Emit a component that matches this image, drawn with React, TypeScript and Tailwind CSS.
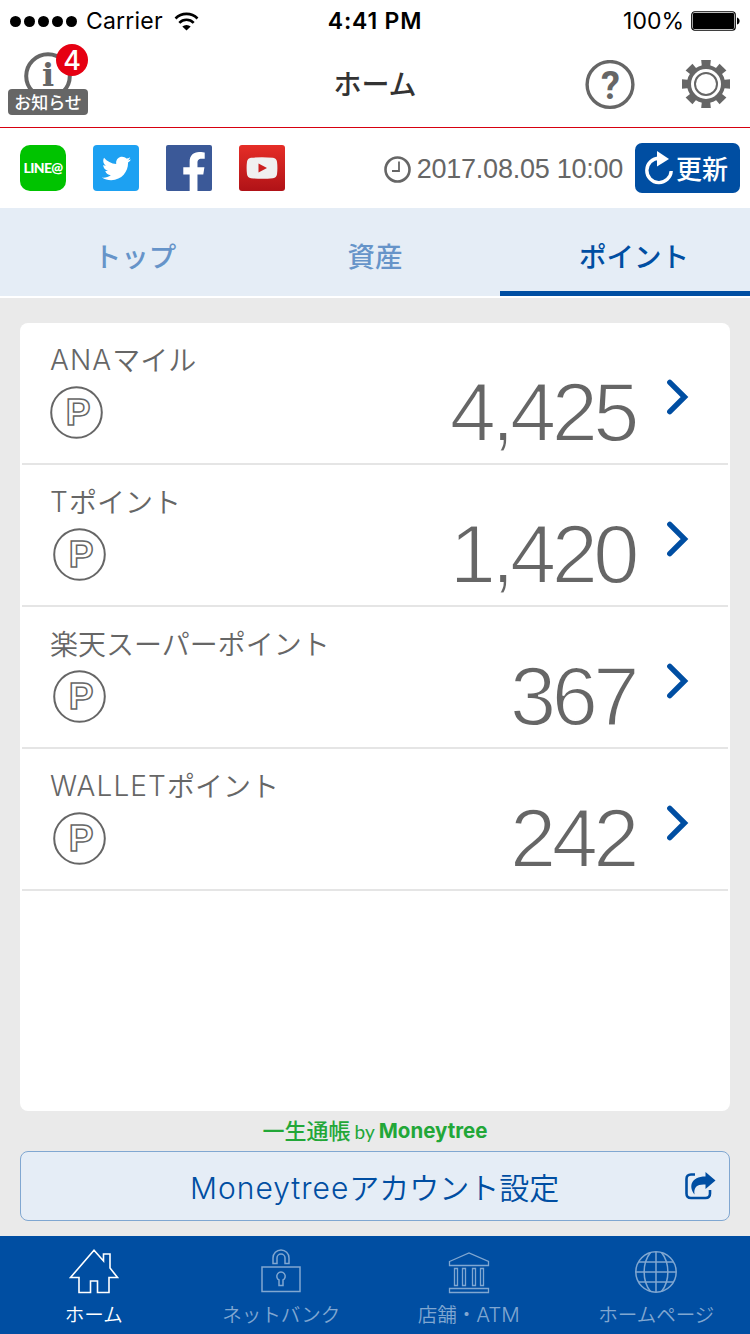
import React from 'react';
import { FaFacebookF, FaTwitter } from 'react-icons/fa';

const points = [
  { name: 'ANA', kana: 'マイル', value: '4,425', iconOffset: 'ml-[30px]' },
  { name: 'T', kana: 'ポイント', value: '1,420', iconOffset: 'ml-[33px]' },
  { name: '', kana: '楽天スーパーポイント', value: '367', iconOffset: 'ml-[33px]' },
  { name: 'WALLET', kana: 'ポイント', value: '242', iconOffset: 'ml-[33px]' },
];

const StatusBar: React.FC = () => (
  <div className="grid h-10 grid-cols-3 items-center pt-[2px] font-['Inter',sans-serif] text-[23px] leading-none text-black">
    <div className="flex items-center pl-[10px]">
      <div className="flex gap-[3px]">
        {[0, 1, 2, 3, 4].map((i) => (
          <span key={i} className="size-[11px] rounded-full bg-black" />
        ))}
      </div>
      <span className="ml-[9px] tracking-[0.2px]">Carrier</span>
      <svg className="ml-[11px]" width="25" height="19" viewBox="0 0 25 19">
        <path d="M1.500 6.500a15.500 15.500 0 0 1 22 0" fill="none" stroke="#000" strokeWidth="2.600" />
        <path d="M5.300 10.800a10 10 0 0 1 14.400 0" fill="none" stroke="#000" strokeWidth="2.600" />
        <path d="M8.300 14.600a6 6 0 0 1 8.400 0L12.500 18.600z" />
      </svg>
    </div>
    <div className="text-center font-semibold tracking-[0.8px]">4:41 PM</div>
    <div className="flex items-center justify-end pr-[10px]">
      <span>100%</span>
      <svg className="ml-[7px]" width="49" height="20" viewBox="0 0 49 20">
        <rect x="0.750" y="0.750" width="43.500" height="18.500" rx="3" fill="#fff" stroke="#000" strokeWidth="1.200" />
        <rect x="2" y="2" width="41" height="16" rx="1" />
        <path d="M46 6.500c3.500 1 3.500 6 0 7z" />
      </svg>
    </div>
  </div>
);

const GearIcon: React.FC = () => (
  <svg width="48" height="48" viewBox="-24 -24 48 48">
    {[0, 45, 90, 135, 180, 225, 270, 315].map((a) => (
      <path key={a} d="M-4.800 -24h9.600L4 -16h-8z" fill="#666" transform={`rotate(${a})`} />
    ))}
    <circle r="17" fill="none" stroke="#666" strokeWidth="4" />
    <circle r="11" fill="none" stroke="#666" strokeWidth="2" />
  </svg>
);

const Header: React.FC = () => (
  <header className="grid h-[88px] grid-cols-3 border-b border-[#d7000f]">
    <div className="relative pt-3 pl-6">
      <svg width="48" height="48" viewBox="0 0 48 48">
        <circle cx="24" cy="24" r="21.800" fill="none" stroke="#666" strokeWidth="4" />
        <text x="24" y="34" textAnchor="middle" fontSize="32" fontWeight="700" fontFamily="DejaVu Serif, serif" fill="#666">i</text>
      </svg>
      <span className="absolute top-[49px] left-2 flex h-[26px] w-20 items-center justify-center rounded bg-[#666] pb-[2px] text-[17px] leading-none font-medium text-white">お知らせ</span>
      <span className="absolute top-1 left-14 flex size-8 items-center justify-center rounded-full bg-[#e60012] font-['Inter',sans-serif] text-[27px] leading-none font-medium text-white">4</span>
    </div>
    <h1 className="pt-[29px] text-center text-[28px] leading-[28px] font-medium text-[#333]">ホーム</h1>
    <div className="flex justify-end gap-[47px] pt-5 pr-5">
      <svg width="50" height="50" viewBox="0 0 50 50">
        <circle cx="25" cy="24.500" r="22.900" fill="none" stroke="#666" strokeWidth="3.400" />
        <text x="25.500" y="38.500" textAnchor="middle" fontSize="38" fontWeight="700" fontFamily="Roboto, sans-serif" fill="#666">?</text>
      </svg>
      <GearIcon />
    </div>
  </header>
);

const SocialBar: React.FC = () => (
  <div className="flex h-20 items-center pr-[10px] pl-5">
    <div className="flex gap-[27px]">
      <div className="flex size-[46px] items-center justify-center rounded-[10px] bg-[#00c300] font-['Lato',sans-serif] text-[14px] leading-none font-black tracking-[-0.7px] text-white">LINE@</div>
      <div className="flex size-[46px] items-center justify-center rounded bg-[#1da1f2] text-white">
        <FaTwitter size={29} />
      </div>
      <div className="flex size-[46px] items-end justify-end overflow-hidden rounded-[2px] bg-[#3b5998] text-white">
        <FaFacebookF size={40} className="translate-x-[2px] translate-y-px" />
      </div>
      <div className="flex size-[46px] items-center justify-center rounded-[3px] bg-linear-to-b from-[#e62d27] to-[#b01217]">
        <svg width="32" height="22" viewBox="0 0 32 22">
          <path d="M5 .8Q16-.4 27 .8q3.500.4 4 4 .8 6.200 0 12.400-.5 3.600-4 4-11 1.200-22 0-3.500-.4-4-4-.8-6.200 0-12.400.5-3.600 4-4z" fill="#f0f0f0" />
          <path d="M12.500 6.500v9l8.500-4.500z" fill="#cc1f1f" />
        </svg>
      </div>
    </div>
    <div className="ml-auto flex items-center pt-[3px] text-[#666]">
      <svg width="27" height="27" viewBox="0 0 27 27" fill="none" stroke="#666">
        <circle cx="13.500" cy="13.500" r="12" strokeWidth="2.600" />
        <path d="M15 5.500V15H8" strokeWidth="1.800" />
      </svg>
      <span className="ml-[6px] font-['Liberation_Sans',sans-serif] text-[27px] leading-none tracking-[-0.25px]">2017.08.05 10:00</span>
    </div>
    <button className="ml-3 flex h-[50px] w-[105px] items-center rounded-[7px] bg-[#004ea2] pl-[9px] text-[26px] leading-none font-medium text-white">
      <svg width="31" height="34" viewBox="0 0 31 34">
        <path d="M15 7.200A12.200 12.200 0 1 0 27.200 20" fill="none" stroke="#fff" strokeWidth="3.400" />
        <path d="M13 0v15.500L25 8z" fill="#fff" />
      </svg>
      <span className="ml-px">更新</span>
    </button>
  </div>
);

const Tabs: React.FC = () => (
  <nav className="grid h-[90px] grid-cols-3 border-b-2 border-white bg-[#e5edf6] text-center text-[27.500px] leading-[27px] font-medium text-[#6694c9]">
    <div className="pt-[34px]">
      <span className="ml-5">トップ</span>
    </div>
    <div className="pt-[34px]">資産</div>
    <div className="border-b-[5px] border-[#004ea2] pt-[34px] text-[#004ea2]">
      <span className="ml-[18px]">ポイント</span>
    </div>
  </nav>
);

const PointIcon: React.FC = () => (
  <svg width="53" height="53" viewBox="0 0 53 53" fill="none" stroke="#666">
    <circle cx="26.500" cy="26.500" r="25.300" strokeWidth="2" />
    <text x="28" y="39" textAnchor="middle" fontSize="37" fontWeight="700" fontFamily="Liberation Sans, sans-serif" strokeWidth="1.500">P</text>
  </svg>
);

const PointList: React.FC = () => (
  <section className="mx-5 h-[788px] rounded-lg bg-white px-[2px] text-[#666]">
    {points.map((p) => (
      <div key={p.kana + p.value} className="flex h-[142px] justify-between border-b-2 border-[#e5e5e5]">
        <div className="-ml-[2px] pt-[22px]">
          <div className="ml-[30px] flex h-[30px] items-center text-[28px] leading-none font-[350] whitespace-nowrap">
            <span className="font-['Inter',sans-serif] font-light tracking-[1.100px]">{p.name}</span>
            <span className="-mt-[3px]">{p.kana}</span>
          </div>
          <div className={`mt-[11px] ${p.iconOffset}`}>
            <PointIcon />
          </div>
        </div>
        <div className="flex pr-[39px]">
          {/* the white stroke thins the digits down to a light weight */}
          <span className="pt-[48px] font-['Liberation_Sans',sans-serif] text-[83px] leading-[83px] tracking-[-4.500px] [-webkit-text-stroke:1.800px_#fff]">{p.value}</span>
          <svg className="mt-[55px] ml-[32px]" width="22" height="38" viewBox="0 0 22 38">
            <path d="M2.800 4.300L17.500 19 2.800 33.700" fill="none" stroke="#004ea2" strokeWidth="5.400" strokeLinecap="round" />
          </svg>
        </div>
      </div>
    ))}
  </section>
);

const ShareIcon: React.FC = () => (
  <svg width="31" height="28" viewBox="0 0 31 28">
    <path d="M10 2.500H6q-4.500 0-4.500 4.500v14.500q0 4.500 4.500 4.500h14.500q4.500 0 4.500-4.500V18" fill="none" stroke="#004ea2" strokeWidth="2.600" />
    <path d="M20.500 0L30.500 8.500l-10 8.500v-4.500c-8-.5-12 2-11 10C3.500 15 5.500 4.500 20.500 4.500z" fill="#004ea2" />
  </svg>
);

const HomeIcon = (
  <svg width="50" height="46" viewBox="0 0 50 46" fill="none" stroke="currentColor" strokeWidth="1.600">
    <path d="M25 2.200L1.500 29.500H10V44.500h11.500V33h7v11.500H40V29.500h8.500L41 20V6h-6.500V13z" />
  </svg>
);

const LockIcon = (
  <svg width="40" height="46" viewBox="0 0 40 46" fill="none" stroke="currentColor" strokeWidth="1.500">
    <path d="M12 15.500V10a8 8 0 0 1 16 0v5.500h-4V10a4 4 0 0 0-8 0v5.500z" />
    <path d="M1 19h38v24.500H1z" />
    <path d="M18 32a4.200 4.200 0 1 1 4 0v5.500h-4z" />
  </svg>
);

const BankIcon = (
  <svg width="42" height="46" viewBox="0 0 42 46" fill="none" stroke="currentColor" strokeWidth="1.300">
    <path d="M1.500 13.500L21 5l19.500 8.500v4h-39zM1.500 40.500h39v4h-39zM6.500 20.500h3v17h-3zM14.500 20.500h3v17h-3zM24.500 20.500h3v17h-3zM32.500 20.500h3v17h-3z" />
  </svg>
);

const GlobeIcon = (
  <svg width="42" height="46" viewBox="0 0 42 46" fill="none" stroke="currentColor" strokeWidth="1.500">
    <circle cx="21" cy="24" r="20.200" />
    <path d="M21 4v40M1 24h40M4 14h34M4 34h34M15.500 4.500C7 15 7 33 15.500 43.500M26.500 4.500c8.500 10.500 8.500 28.500 0 39" />
  </svg>
);

const navItems = [
  { label: 'ホーム', icon: HomeIcon, active: true },
  { label: 'ネットバンク', icon: LockIcon },
  { label: '店舗・', latin: 'ATM', icon: BankIcon },
  { label: 'ホームページ', icon: GlobeIcon },
];

const BottomNav: React.FC = () => (
  <nav className="grid h-[98px] grid-cols-4 bg-[#004ea2]">
    {navItems.map((item) => (
      <div key={item.label} className={`flex flex-col items-center pt-3 ${item.active ? 'text-white' : 'text-[#80a7d1]'}`}>
        {item.icon}
        <span className="mt-[10px] text-[19.500px] leading-[20px] font-[350]">
          {item.label}
          {item.latin && <span className="font-['Inter',sans-serif] text-[20.500px] font-light">{item.latin}</span>}
        </span>
      </div>
    ))}
  </nav>
);

export default function App() {
  return (
    <div className="flex h-[1334px] w-[750px] flex-col overflow-hidden bg-[#eaeaea] font-['Noto_Sans_CJK_JP',sans-serif]">
      <div className="bg-white">
        <StatusBar />
        <Header />
        <SocialBar />
      </div>
      <Tabs />
      <main className="flex-1 pt-[25px]">
        <PointList />
        <div className="flex h-10 items-center justify-center text-[22px] leading-none text-[#22a738]">
          <span className="pb-[4px] font-medium">一生通帳</span>
          <span className="ml-1 font-['Lato',sans-serif] text-[19px]">by</span>
          <span className="ml-1 font-['Inter',sans-serif] text-[20.500px] font-bold">Moneytree</span>
        </div>
        <button className="mx-5 flex h-[70px] w-[710px] items-center rounded-[8px] border border-[#80a7d1] bg-[#e5edf6] pr-[13px] text-[30px] leading-none font-[350] text-[#004ea2]">
          <span className="ml-[169px] pt-[3px] font-['Inter',sans-serif] font-light tracking-[1px]">Moneytree</span>
          <span>アカウント設定</span>
          <span className="ml-auto"><ShareIcon /></span>
        </button>
      </main>
      <BottomNav />
    </div>
  );
}
